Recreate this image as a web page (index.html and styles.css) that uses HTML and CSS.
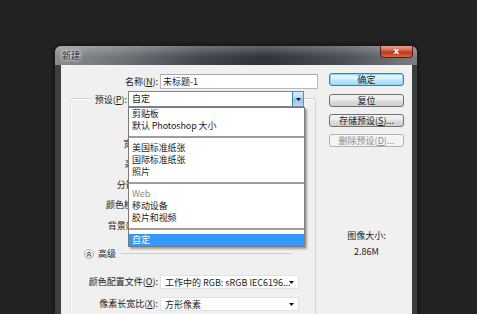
FILE: index.html
```html
<!DOCTYPE html>
<html>
<head>
<meta charset="utf-8">
<link rel="stylesheet" href="styles.css">
</head>
<body>
<div class="window">
  <div class="titlebar">
    <span class="title">新建</span>
    <span class="close">x</span>
  </div>
  <div class="content">
    <div class="main">
      <div class="name-row">
        <label class="lbl">名称(<u>N</u>):</label>
        <div class="field">未标题-1</div>
      </div>

      <div class="group">
        <div class="legend">
          <label class="lbl-preset">预设(<u>P</u>):</label>
          <div class="select">
            自定
            <span class="arrow"><svg width="5" height="3" viewBox="0 0 5 3"><path d="M0 0h5L2.5 3z" fill="#111"/></svg></span>
            <div class="list">
              <div class="item">剪贴板</div>
              <div class="item">默认 Photoshop 大小</div>
              <div class="sep"></div>
              <div class="item">美国标准纸张</div>
              <div class="item">国际标准纸张</div>
              <div class="item">照片</div>
              <div class="sep"></div>
              <div class="item grey">Web</div>
              <div class="item">移动设备</div>
              <div class="item">胶片和视频</div>
              <div class="sep"></div>
              <div class="item on">自定</div>
            </div>
          </div>
        </div>
        <div class="rows">
          <div class="grow"><label class="glbl">宽度(<u>W</u>):</label></div>
          <div class="grow"><label class="glbl">高度(<u>H</u>):</label></div>
          <div class="grow"><label class="glbl">分辨率(<u>R</u>):</label></div>
          <div class="grow"><label class="glbl">颜色模式(<u>M</u>):</label></div>
          <div class="grow"><label class="glbl">背景内容(<u>C</u>):</label></div>
        </div>

        <div class="adv-head">
          <span class="chev"><svg width="6" height="6" viewBox="0 0 6 6"><path d="M0.8 3L3 0.9 5.2 3M0.8 5.4L3 3.3 5.2 5.4" fill="none" stroke="#333" stroke-width="1"/></svg></span>
          <span class="adv-text">高级</span>
          <span class="adv-line"></span>
        </div>

        <div class="adv-row">
          <label class="glbl">颜色配置文件(<u>O</u>):</label>
          <div class="drop">工作中的 RGB: sRGB IEC6196...<span class="tri"><svg width="5" height="3" viewBox="0 0 5 3"><path d="M0 0h5L2.5 3z" fill="#111"/></svg></span></div>
        </div>
        <div class="adv-row">
          <label class="glbl">像素长宽比(<u>X</u>):</label>
          <div class="drop">方形像素<span class="tri"><svg width="5" height="3" viewBox="0 0 5 3"><path d="M0 0h5L2.5 3z" fill="#111"/></svg></span></div>
        </div>
      </div>
    </div>

    <div class="side">
      <div class="btn default">确定</div>
      <div class="btn">复位</div>
      <div class="btn">存储预设(<u>S</u>)...</div>
      <div class="btn disabled">删除预设(<u>D</u>)...</div>
      <div class="size-title">图像大小:</div>
      <div class="size-value">2.86M</div>
    </div>
  </div>
</div>
</body>
</html>
```

FILE: styles.css
```css
* {
  box-sizing: border-box;
}
body {
  margin: 0;
  height: 314px;
  overflow: hidden;
  background: #232323;
  font-family: "Noto Sans CJK SC", sans-serif;
  font-size: 9px;
  color: #1c1c1c;
}
u {
  text-decoration: underline;
}

.window {
  margin: 46px 0 0 55px;
  width: 362px;
  height: 268px;
  padding: 0 5px 0 6px;
  border-radius: 6px 6px 0 0;
  background: linear-gradient(90deg, #3c3f42, #55595d 50%, #3a3d40);
  box-shadow: 0 0 6px rgba(0, 0, 0, 0.7);
  display: flex;
  flex-direction: column;
}
.titlebar {
  height: 19px;
  margin: 0 -5px 0 -6px;
  padding: 0 4px 0 7px;
  border-radius: 6px 6px 0 0;
  display: flex;
  justify-content: space-between;
  align-items: flex-start;
  background:
    linear-gradient(180deg, rgba(255,255,255,0.25), rgba(255,255,255,0) 60%),
    linear-gradient(100deg, #8a8e92 0%, #6e7378 18%, #41474d 40%, #2c3238 58%, #4a5056 80%, #7c8085 100%);
}
.title {
  margin-top: 4px;
  color: #202020;
  text-shadow: 0 0 3px #fff, 0 0 5px #fff;
  line-height: 11px;
}
.close {
  width: 33px;
  height: 12px;
  border: 1px solid #5e1d12;
  border-top: none;
  border-radius: 0 0 4px 4px;
  background: linear-gradient(#e9a494, #cf5a41 45%, #b8331c 55%, #d86a48);
  color: #fff;
  font-family: "DejaVu Sans", sans-serif;
  font-weight: bold;
  font-size: 9px;
  line-height: 10px;
  text-align: center;
}

.content {
  flex: 1;
  background: #f0f0f0;
  display: flex;
  overflow: hidden;
}
.main {
  width: 259px;
  padding-top: 9px;
}

.name-row {
  display: flex;
  align-items: center;
  gap: 2px;
}
.lbl {
  width: 97px;
  text-align: right;
  white-space: nowrap;
}
.field {
  width: 158px;
  height: 15px;
  padding-left: 2px;
  line-height: 13px;
  background: #fff;
  border: 1px solid #b6babf;
  border-top-color: #a3a7ac;
}

.group {
  margin: 9px 4px 0 9px;
  width: 246px;
  border: 1px solid #cfd3d6;
  border-left-color: #dcdfe1;
  border-radius: 3px;
  box-shadow: inset 1px 1px #fff;
  padding-bottom: 20px;
}
.legend {
  display: flex;
  align-items: center;
  margin: -8px 0 0 20px;
  width: 213px;
  background: #f0f0f0;
}
.lbl-preset {
  width: 36px;
  text-align: right;
  white-space: nowrap;
}
.select {
  position: relative;
  margin-left: 1px;
  width: 176px;
  height: 16px;
  padding-left: 3px;
  line-height: 14px;
  background: #fff;
  border: 1px solid #7f8489;
}
.arrow {
  position: absolute;
  right: 0;
  top: 0;
  width: 11px;
  height: 14px;
  display: flex;
  align-items: center;
  justify-content: center;
  background: linear-gradient(#d9effc, #a9d6f5 50%, #86c2ec 51%, #b6dcf5);
  border-left: 1px solid #3c7fb1;
}
.list {
  position: absolute;
  left: -1px;
  top: 15px;
  width: 177px;
  background: #fff;
  border: 1px solid #7a7a7a;
  box-shadow: 2px 2px 2px rgba(0, 0, 0, 0.35);
  z-index: 2;
}
.item {
  height: 12px;
  line-height: 12px;
  padding-left: 3px;
  white-space: nowrap;
  letter-spacing: -0.1px;
}
.item.grey {
  color: #8a8a8a;
}
.item.on {
  background: #3399ff;
  color: #fff;
}
.sep {
  height: 2px;
  margin: 4px 0;
  background: #9d9d9d;
}

.rows {
  margin-top: 26px;
}
.grow {
  height: 20.5px;
  display: flex;
  align-items: center;
}
.glbl {
  width: 87px;
  text-align: right;
  white-space: nowrap;
}

.adv-head {
  display: flex;
  align-items: center;
  margin: 13px 0 0 13px;
  width: 208px;
  height: 10px;
}
.chev {
  width: 10px;
  height: 10px;
  border-radius: 50%;
  border: 1px solid #b4b4b4;
  background: linear-gradient(#fff, #dedede);
  display: flex;
  align-items: center;
  justify-content: center;
}
.adv-text {
  margin-left: 4px;
  line-height: 10px;
}
.adv-line {
  flex: 1;
  height: 1px;
  margin-left: 5px;
  background: #cfcfcf;
}

.adv-row {
  display: flex;
  align-items: center;
  gap: 2px;
  margin-top: 8px;
}
.adv-head + .adv-row {
  margin-top: 16px;
}
.drop {
  position: relative;
  width: 139px;
  height: 14px;
  padding-left: 4px;
  line-height: 13px;
  background: #fff;
  border: 1px solid #e2e2e2;
  white-space: nowrap;
}
.tri {
  position: absolute;
  right: 4px;
  top: 5px;
  display: flex;
}

.side {
  margin-left: 9px;
  width: 75px;
  padding-top: 8px;
  display: flex;
  flex-direction: column;
  align-items: stretch;
}
.btn {
  height: 13px;
  margin-bottom: 7px;
  border: 1px solid #707070;
  border-radius: 3px;
  background: linear-gradient(#f3f3f3, #ebebeb 48%, #dcdcdc 52%, #d0d0d0);
  text-align: center;
  line-height: 11px;
  white-space: nowrap;
}
.btn.default {
  margin-bottom: 8px;
  border-color: #3c7fb1;
  box-shadow: inset 0 0 0 1px #8fd8f8;
  background: linear-gradient(#eaf6fd, #d9f0fc 48%, #bee6fd 52%, #a7d9f5);
}
.btn.disabled {
  border-color: #adb2b5;
  background: #f4f4f4;
  color: #8c8c8c;
}
.size-title {
  margin-top: 76px;
  text-align: center;
  line-height: 12px;
}
.size-value {
  margin-top: 4px;
  text-align: center;
  line-height: 12px;
}
```
